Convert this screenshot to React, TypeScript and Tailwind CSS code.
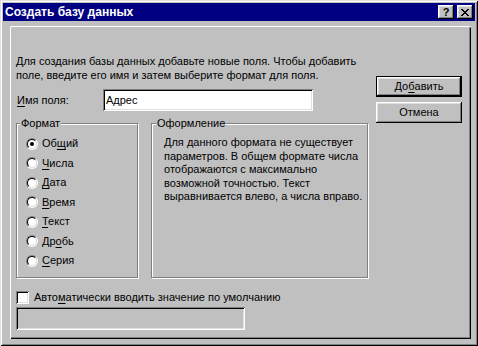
import React from 'react';

const raised = 'shadow-[inset_-1px_-1px_#000,inset_1px_1px_#fff,inset_-2px_-2px_#808080,inset_2px_2px_#dfdfdf]';
const sunken = 'shadow-[inset_1px_1px_#808080,inset_-1px_-1px_#fff,inset_2px_2px_#000,inset_-2px_-2px_#dfdfdf]';

function U({ children }: { children: React.ReactNode }) {
  return <span className="underline underline-offset-[2px] decoration-1">{children}</span>;
}

function Radio({ checked }: { checked?: boolean }) {
  return <span className="flex w-[12px] h-[12px] shrink-0 rounded-full border border-t-[#808080] border-l-[#808080] border-r-white border-b-white">
      <span className="flex w-full h-full items-center justify-center rounded-full border border-t-black border-l-black border-r-[#dfdfdf] border-b-[#dfdfdf] bg-white">
        {checked && <span className="w-[4px] h-[4px] rounded-full bg-black" />}
      </span>
    </span>;
}

function CloseGlyph() {
  return <svg width="8" height="7" viewBox="0 0 8 7" shapeRendering="crispEdges">
      <path d="M0 0h2v1h-2zM6 0h2v1h-2zM1 1h2v1h-2zM5 1h2v1h-2zM2 2h4v1h-4zM3 3h2v1h-2zM2 4h4v1h-4zM1 5h2v1h-2zM5 5h2v1h-2zM0 6h2v1h-2zM6 6h2v1h-2z" fill="#000" />
    </svg>;
}

const formats: { label: React.ReactNode; checked?: boolean }[] = [
  { label: <>Об<U>щ</U>ий</>, checked: true },
  { label: <><U>Ч</U>исла</> },
  { label: <><U>Д</U>ата</> },
  { label: <><U>В</U>ремя</> },
  { label: <><U>Т</U>екст</> },
  { label: <>Др<U>о</U>бь</> },
  { label: <><U>С</U>ерия</> },
];

export default function App() {
  return <div className={`w-[478px] h-[346px] bg-[#c0c0c0] p-[3px] flex flex-col text-black text-[11px] font-['Liberation_Sans',Arial,sans-serif] shadow-[inset_1px_1px_#dfdfdf,inset_-1px_-1px_#000,inset_2px_2px_#fff,inset_-2px_-2px_#808080]`}>
      {/* title bar */}
      <div className="h-[18px] bg-[#000080] flex items-center pl-[2px] pr-[2px]">
        <span className="flex-1 text-white font-bold text-[12px] leading-[18px] whitespace-nowrap">Создать базу данных</span>
        <div className={`w-[16px] h-[14px] bg-[#c0c0c0] flex items-center justify-center font-bold text-[11px] leading-none ${raised}`}>?</div>
        <div className={`ml-[3px] w-[16px] h-[14px] bg-[#c0c0c0] flex items-center justify-center ${raised}`}>
          <CloseGlyph />
        </div>
      </div>

      {/* page */}
      <div className="ml-[7px] mt-[5px] w-[461px] h-[313px] flex items-start pl-[5px] pt-[27px] border-l border-t border-white rounded-tl-[2px] rounded-tr-[2px] shadow-[inset_-1px_-1px_#000,inset_-2px_-2px_#808080]">
        <div className="w-[353px] flex flex-col">
          <p className="leading-[14px] whitespace-nowrap">
            Для создания базы данных добавьте новые поля. Чтобы добавить<br />
            поле, введите его имя и затем выберите формат для поля.
          </p>

          <div className="mt-[7px] flex items-center h-[22px]">
            <span className="w-[87px] pl-[1px]"><U>И</U>мя поля:</span>
            <div className={`w-[210px] h-[22px] bg-white flex items-center pl-[3px] ${sunken}`}>Адрес</div>
          </div>

          <div className="mt-[6px] flex gap-[13px]">
            <fieldset className="m-0 w-[122px] h-[161px] border border-[#808080] px-0 pt-[4px] pb-0 shadow-[inset_1px_1px_#fff,1px_1px_#fff]">
              <legend className="ml-[3px] px-[1px] leading-[13px] bg-[#c0c0c0]">Формат</legend>
              <div className="flex flex-col pl-[9px]">
                {formats.map((f, i) => <div key={i} className="h-[19.5px] flex items-center gap-[4px]">
                      <Radio checked={f.checked} />
                      <span className="leading-[13px]">{f.label}</span>
                    </div>)}
              </div>
            </fieldset>
            <fieldset className="m-0 w-[217px] h-[161px] border border-[#808080] p-0 shadow-[inset_1px_1px_#fff,1px_1px_#fff]">
              <legend className="ml-[4px] px-[1px] leading-[13px] bg-[#c0c0c0]">Оформление</legend>
              <p className="pl-[12px] pt-[6px] leading-[13.5px] whitespace-nowrap">
                Для данного формата не существует<br />
                параметров. В общем формате числа<br />
                отображаются с максимально<br />
                возможной точностью. Текст<br />
                выравнивается влево, а числа вправо.
              </p>
            </fieldset>
          </div>

          <div className="mt-[13px] flex items-center h-[13px] gap-[5px]">
            <span className={`w-[13px] h-[13px] bg-white ${sunken}`} />
            <span className="whitespace-nowrap">Авто<U>м</U>атически вводить значение по умолчанию</span>
          </div>
          <div className={`mt-[3px] w-[229px] h-[23px] bg-[#c0c0c0] ${sunken}`} />
        </div>

        <div className="ml-[7px] w-[86px] flex flex-col mt-[22px] gap-[5px]">
          <button className={`h-[21px] w-[86px] border border-black bg-[#c0c0c0] flex items-center justify-center ${raised}`}>
            До<U>б</U>авить
          </button>
          <button className={`h-[21px] w-[86px] bg-[#c0c0c0] flex items-center justify-center ${raised}`}>
            Отмена
          </button>
        </div>
      </div>
    </div>;
}
